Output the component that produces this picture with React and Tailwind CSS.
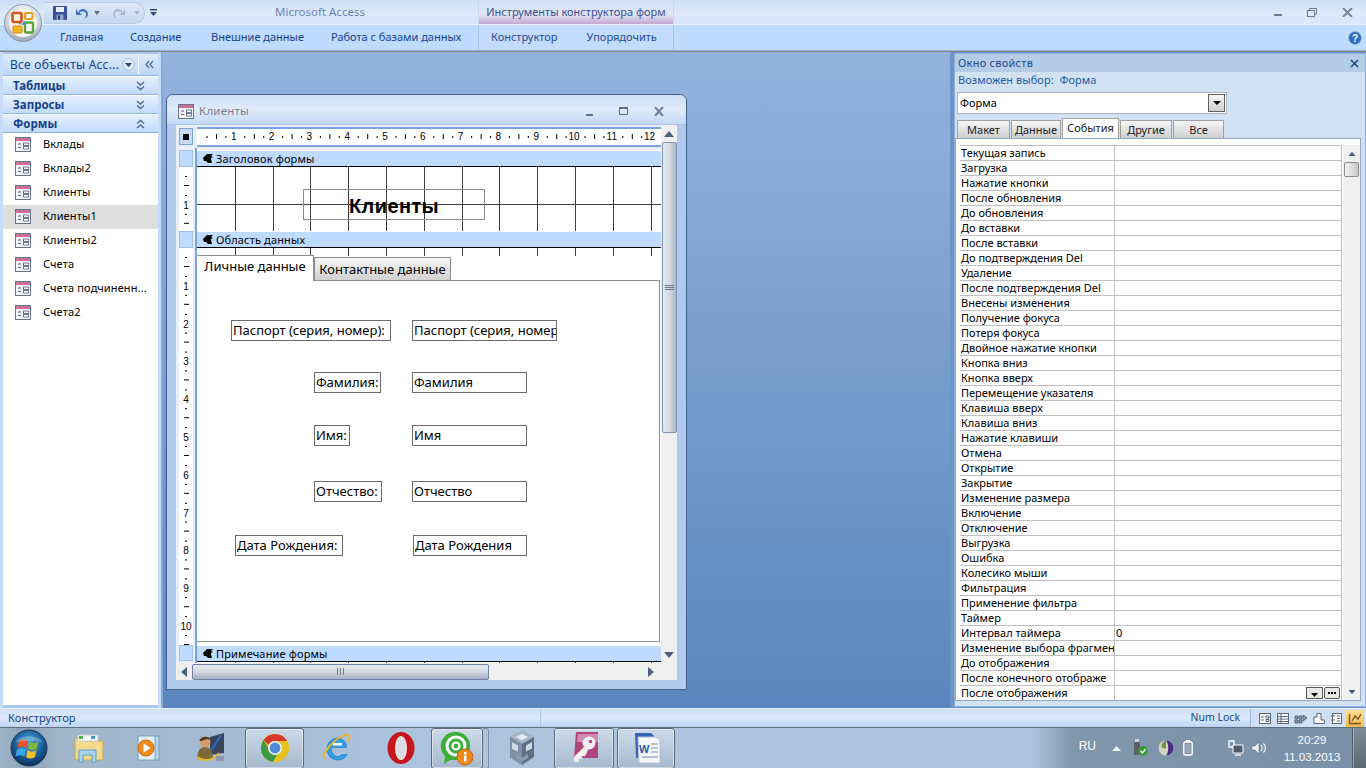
import React from 'react';

const NAV_ITEMS = ['Вклады', 'Вклады2', 'Клиенты', 'Клиенты1', 'Клиенты2', 'Счета', 'Счета подчиненн...', 'Счета2'];

const PROPS = [
  'Текущая запись', 'Загрузка', 'Нажатие кнопки', 'После обновления', 'До обновления', 'До вставки', 'После вставки',
  'До подтверждения Del', 'Удаление', 'После подтверждения Del', 'Внесены изменения', 'Получение фокуса', 'Потеря фокуса',
  'Двойное нажатие кнопки', 'Кнопка вниз', 'Кнопка вверх', 'Перемещение указателя', 'Клавиша вверх', 'Клавиша вниз',
  'Нажатие клавиши', 'Отмена', 'Открытие', 'Закрытие', 'Изменение размера', 'Включение', 'Отключение', 'Выгрузка', 'Ошибка',
  'Колесико мыши', 'Фильтрация', 'Применение фильтра', 'Таймер', 'Интервал таймера', 'Изменение выбора фрагмен',
  'До отображения', 'После конечного отображе', 'После отображения',
];

const PROP_TABS = [
  { name: 'Макет', w: 'w-[53px]' },
  { name: 'Данные', w: 'w-[50px]' },
  { name: 'События', w: 'w-[57px]' },
  { name: 'Другие', w: 'w-[52px]' },
  { name: 'Все', w: 'w-[51px]' },
];

// контролы на поверхности формы: положение - это и есть содержимое макета
const FIELDS = [
  { label: 'Паспорт (серия, номер):', lx: 34, lw: 160, value: 'Паспорт (серия, номер)', vx: 215, vw: 145, y: 72, h: 21 },
  { label: 'Фамилия:', lx: 117, lw: 67, value: 'Фамилия', vx: 215, vw: 115, y: 124, h: 21 },
  { label: 'Имя:', lx: 117, lw: 36, value: 'Имя', vx: 215, vw: 115, y: 177, h: 21 },
  { label: 'Отчество:', lx: 117, lw: 68, value: 'Отчество', vx: 215, vw: 115, y: 233, h: 21 },
  { label: 'Дата Рождения:', lx: 38, lw: 108, value: 'Дата Рождения', vx: 216, vw: 114, y: 287, h: 21 },
];

function FormIcon({ className = '' }) {
  return (
    <svg width="16" height="15" viewBox="0 0 16 15" className={className}>
      <rect x="0.5" y="0.5" width="15" height="14" fill="#f4f6fa" stroke="#66758e" />
      <rect x="1" y="1" width="14" height="3" fill="#cf6f98" />
      <path d="M3 7h3M3 10.5h3" stroke="#4a5a78" />
      <rect x="8.5" y="6" width="5" height="2.5" fill="#fff" stroke="#4a5a78" strokeWidth="0.8" />
      <rect x="8.5" y="9.5" width="5" height="2.5" fill="#fff" stroke="#4a5a78" strokeWidth="0.8" />
    </svg>
  );
}

function DoubleChevron({ up = false }) {
  return (
    <svg width="9" height="10" viewBox="0 0 9 10" className={up ? 'rotate-180' : ''}>
      <path d="M1 1l3.5 3L8 1M1 5.5l3.5 3 3.5-3" fill="none" stroke="#4a6a9a" strokeWidth="1.4" />
    </svg>
  );
}

function OfficeButton() {
  return (
    <svg width="38" height="38" viewBox="0 0 38 38" className="absolute left-[4px] top-[4px] z-10">
      <defs>
        <radialGradient id="orbRing" cx="50%" cy="25%" r="80%">
          <stop offset="0%" stopColor="#f4f5f7" />
          <stop offset="65%" stopColor="#c9d0da" />
          <stop offset="100%" stopColor="#8f9aa8" />
        </radialGradient>
      </defs>
      <circle cx="19" cy="19" r="18.5" fill="url(#orbRing)" stroke="#8b99ac" />
      <circle cx="19" cy="19" r="14" fill="#f6f4ee" />
      <rect x="8.5" y="9" width="9" height="9" rx="1.5" fill="none" stroke="#d8541c" strokeWidth="2.6" />
      <rect x="21" y="9" width="7.500" height="6" rx="1" fill="none" stroke="#e8a21d" strokeWidth="2.2" />
      <rect x="9" y="22" width="9" height="7" rx="1" fill="#f2b81f" stroke="#d6891a" />
      <rect x="21" y="18.500" width="8" height="10" rx="1.500" fill="none" stroke="#5aa53a" strokeWidth="2.4" />
      <path d="M17.500 20h3M20 17v3M15 19.500h1.500" stroke="#3f86c8" strokeWidth="1.500" />
    </svg>
  );
}

function SectionBar({ label }) {
  return (
    <div className="h-[17px] shrink-0 bg-[#bfdbff] border-t border-t-white border-b border-b-black flex items-center pl-[6px] gap-[3px] text-[11px] text-black leading-none">
      <svg width="10" height="9" viewBox="0 0 10 9">
        <path d="M0 4L4 0h6L8 2l2 1-2 1v1l1 4H5L3 7H1z" fill="#000" />
      </svg>
      <span className="tracking-[0.15px]">{label}</span>
    </div>
  );
}

function RulerH() {
  const marks = [];
  for (let i = 0; i <= 12; i++) {
    const x = i * 37.8;
    if (i > 0) {
      marks.push(
        <text key={`n${i}`} x={x - 1} y="11" textAnchor="middle" fontSize="10" fontFamily="Liberation Sans" fill="#000">{i}</text>
      );
    }
    if (i < 12) {
      marks.push(<rect key={`a${i}`} x={x + 9.5} y="7" width="1" height="2" fill="#000" />);
      marks.push(<rect key={`b${i}`} x={x + 19} y="5" width="1" height="5" fill="#000" />);
      marks.push(<rect key={`c${i}`} x={x + 28.4} y="7" width="1" height="2" fill="#000" />);
    }
  }
  return <svg width="464" height="16" className="block bg-white">{marks}</svg>;
}

function RulerV({ height, count }) {
  const marks = [];
  for (let i = 0; i <= count; i++) {
    const y = i * 37.8;
    if (i > 0) {
      marks.push(
        <text key={`n${i}`} x="7" y={y + 4} textAnchor="middle" fontSize="10" fontFamily="Liberation Sans" fill="#000">{i}</text>
      );
    }
    marks.push(<rect key={`a${i}`} x="6" y={y + 9} width="2" height="1" fill="#000" />);
    marks.push(<rect key={`b${i}`} x="5" y={y + 18} width="5" height="1" fill="#000" />);
    marks.push(<rect key={`c${i}`} x="6" y={y + 28} width="2" height="1" fill="#000" />);
  }
  return <svg width="14" height={height} className="block bg-white shrink-0">{marks}</svg>;
}

function GridBox({ height, hLine }) {
  const verts = [];
  for (let i = 1; i <= 12; i++) {
    const x = Math.round(i * 37.8);
    verts.push(<rect key={i} x={x} y="0" width="1" height={height} fill="#3c3c3c" />);
  }
  return (
    <svg width="464" height={height} className="block absolute left-0 top-0">
      {verts}
      {hLine != null && <rect x="0" y={hLine} width="464" height="1" fill="#3c3c3c" />}
    </svg>
  );
}

function Arrow({ dir, className = '' }) {
  const d = {
    up: 'M0 6L5 0l5 6z',
    down: 'M0 0l5 6 5-6z',
    left: 'M6 0v10L0 5z',
    right: 'M0 0v10l6-5z',
  }[dir];
  const small = dir === 'left' || dir === 'right';
  return (
    <svg width={small ? 6 : 10} height={small ? 10 : 6} viewBox={small ? '0 0 6 10' : '0 0 10 6'} className={className}>
      <path d={d} fill="#4d6185" />
    </svg>
  );
}

function FormWindow() {
  return (
    <div className="absolute left-[3px] top-[42px] w-[521px] h-[596px] border border-[#3f5f8c] rounded-t-[7px] bg-[#b0c9ec] flex flex-col overflow-hidden">
      <div className="h-[30px] shrink-0 pt-[3px] bg-gradient-to-b from-[#cfe0f6] via-[#dfeafa] to-[#c4d9f5] border-b border-[#a9c6ea] flex items-center pl-[11px] pr-[22px]">
        <FormIcon />
        <span className="ml-[5px] text-[11.5px] text-[#7b7f8a] tracking-[0.2px]">Клиенты</span>
        <div className="ml-auto flex items-center gap-[26px]">
          <span className="w-[7px] h-[2px] bg-[#5a6f90] mt-[7px]" />
          <span className="w-[9px] h-[8px] border border-[#5a6f90] border-t-2" />
          <svg width="10" height="9" viewBox="0 0 10 9">
            <path d="M1 0l8 9M9 0L1 9" stroke="#6a7c98" strokeWidth="2" />
          </svg>
        </div>
      </div>

      <div className="flex-1 flex flex-col mx-[9px] bg-[#f0f0f0] min-h-0">
        <div className="flex-1 flex min-h-0">
          {/* поверхность конструктора */}
          <div className="w-[485px] bg-[#e9eff8] flex flex-col min-h-0">
            <div className="h-[23px] shrink-0 flex">
              <div className="w-[21px] pl-[3px] pt-[3px]">
                <div className="w-[14px] h-[17px] bg-[#c4daf7] border border-[#7aa2da] flex items-center justify-center">
                  <span className="w-[6px] h-[6px] bg-black" />
                </div>
              </div>
              <div className="w-[464px] mt-[2px] mb-[2px] border-y-2 border-[#78a3dc] h-[20px] overflow-hidden">
                <RulerH />
              </div>
            </div>
            <div className="flex-1 flex min-h-0">
              <div className="w-[21px] shrink-0 pl-[3px] pr-[3px] border-r-2 border-[#78a3dc] flex flex-col overflow-hidden">
                <div className="h-[17px] mt-[2px] shrink-0 w-[14px] bg-[#bfdbff] border border-[#a0c0e8]" />
                <RulerV height={64} count={1} />
                <div className="h-[17px] shrink-0 w-[14px] bg-[#bfdbff] border border-[#a0c0e8]" />
                <RulerV height={397} count={10} />
                <div className="h-[16px] shrink-0 w-[14px] bg-[#bfdbff] border border-[#a0c0e8]" />
              </div>
              <div className="w-[464px] bg-white flex flex-col overflow-hidden">
                <div className="h-[2px] shrink-0 bg-[#e9eff8]" />
                <SectionBar label="Заголовок формы" />
                <div className="relative h-[64px] shrink-0">
                  <GridBox height={64} hLine={37} />
                  <div className="absolute left-[106px] top-[22px] w-[182px] h-[31px] border border-[#8a8a8a]" />
                  <span className="absolute left-[152px] top-[25px] text-[20px] leading-[28px] font-bold tracking-[0.4px] text-black font-['Liberation_Sans',sans-serif]">Клиенты</span>
                </div>
                <SectionBar label="Область данных" />
                <div className="relative flex-1 min-h-0">
                  <GridBox height={8} />
                  {/* вкладки */}
                  <div className="absolute left-0 top-[7px] w-[117px] h-[26px] bg-white border-t border-r border-[#8e8e8e] z-10 flex items-center justify-center pb-[3px] text-[13px] text-black">Личные данные</div>
                  <div className="absolute left-[117px] top-[9px] w-[137px] h-[24px] bg-gradient-to-b from-[#f6f6f6] to-[#cfcfcf] border border-[#8e8e8e] border-b-0 flex items-center justify-center text-[13px] text-black">Контактные данные</div>
                  <div className="absolute left-0 top-[32px] bottom-[3px] w-[463px] border-t border-r border-b border-[#8e8e8e]" />
                  {FIELDS.map(f => (
                    <React.Fragment key={f.label}>
                      <div
                        className="absolute border border-[#6b6b6b] bg-white text-[13px] leading-[19px] pl-[1px] text-black whitespace-nowrap overflow-hidden"
                        style={{ left: f.lx, top: f.y, width: f.lw, height: f.h }}
                      >{f.label}</div>
                      <div
                        className="absolute border border-[#6b6b6b] bg-white text-[13px] leading-[19px] pl-[1px] text-black whitespace-nowrap overflow-hidden"
                        style={{ left: f.vx, top: f.y, width: f.vw, height: f.h }}
                      >{f.value}</div>
                    </React.Fragment>
                  ))}
                </div>
                <SectionBar label="Примечание формы" />
                <div className="relative h-[1px] shrink-0"><GridBox height={1} /></div>
              </div>
            </div>
          </div>
          {/* вертикальная прокрутка */}
          <div className="w-[16px] bg-[#f0f0f0] flex flex-col items-center">
            <div className="h-[17px] flex items-center justify-center"><Arrow dir="up" /></div>
            <div className="w-[15px] h-[291px] border border-[#8094b5] rounded-[2px] bg-gradient-to-r from-[#e8eaee] via-[#d5dae2] to-[#a9b4c6] flex items-center justify-center">
              <div className="w-[9px] h-[5px] border-y border-[#6d7b92] bg-[linear-gradient(#6d7b92,#6d7b92)] bg-[length:100%_1px] bg-center bg-no-repeat" />
            </div>
            <div className="mt-auto h-[17px] flex items-center justify-center"><Arrow dir="down" /></div>
          </div>
        </div>
        {/* горизонтальная прокрутка */}
        <div className="h-[17px] shrink-0 bg-[#f0f0f0] flex items-center">
          <div className="w-[16px] flex justify-center"><Arrow dir="left" /></div>
          <div className="w-[297px] h-[16px] border border-[#6f82a6] rounded-[2px] bg-gradient-to-b from-[#e8eaee] via-[#d3d8e0] to-[#a4afc2] flex items-center justify-center">
            <div className="w-[7px] h-[7px] border-x border-[#6d7b92] bg-[linear-gradient(#6d7b92,#6d7b92)] bg-[length:1px_100%] bg-center bg-no-repeat" />
          </div>
          <div className="ml-[154px] w-[16px] flex justify-center"><Arrow dir="right" /></div>
        </div>
      </div>
      <div className="h-[9px] shrink-0" />
    </div>
  );
}

function NavPane() {
  return (
    <div className="w-[163px] shrink-0 bg-[#a9c8ef] flex">
      <div className="w-[3px] bg-[#c5dcfa]" />
      <div className="w-[155px] flex flex-col">
        <div className="h-[2px] shrink-0 bg-[#a9c8ef]" />
        <div className="h-[22px] shrink-0 flex items-center bg-gradient-to-b from-[#dcebfe] to-[#bcd7fa] border-b border-[#8fb2de] text-[#15428b] text-[12px] tracking-[0.25px]">
          <span className="pl-[7px] w-[119px] whitespace-nowrap overflow-hidden">Все объекты Асс...</span>
          <span className="w-[13px] h-[13px] rounded-full bg-[#dfe8f5] border border-[#a5b9d5] flex items-center justify-center">
            <svg width="7" height="4" viewBox="0 0 7 4"><path d="M0 0h7L3.5 4z" fill="#25406f" /></svg>
          </span>
          <span className="ml-[3px] h-[19px] w-px bg-white" />
          <span className="ml-[6px]">
            <svg width="9" height="9" viewBox="0 0 9 9"><path d="M4 1L1 4.5 4 8M8 1L5 4.5 8 8" fill="none" stroke="#4a6a9a" strokeWidth="1.3" /></svg>
          </span>
        </div>
        {['Таблицы', 'Запросы', 'Формы'].map((g, i) => (
          <div key={g} className="h-[19px] shrink-0 flex items-center justify-between pl-[10px] pr-[13px] bg-gradient-to-b from-[#e6f0fe] to-[#c2dafb] border-b border-[#8fb2de] border-t border-t-white text-[#15428b] font-bold text-[11.5px] leading-none">
            <span>{g}</span>
            <DoubleChevron up={i === 2} />
          </div>
        ))}
        <div className="flex-1 bg-white">
          {NAV_ITEMS.map(item => (
            <div key={item} className={`h-[24px] pb-[2px] flex items-center pl-[12px] text-[11px] text-black tracking-[0.15px] ${item === 'Клиенты1' ? 'bg-[#dedede]' : ''}`}>
              <FormIcon />
              <span className="ml-[12px] whitespace-nowrap">{item}</span>
            </div>
          ))}
        </div>
        <div className="h-[3px] shrink-0 bg-[#a9c8ef]" />
      </div>
      <div className="w-[3px] bg-[#c5dcfa]" />
      <div className="w-[2px] bg-[#86a9d6]" />
    </div>
  );
}

function PropertySheet() {
  return (
    <div className="w-[416px] shrink-0 bg-[#6d94c6] pl-[4px] flex min-h-0">
      <div className="flex-1 mt-[1px] mb-[1px] border border-[#8fb0dc] bg-[#d3e2f3] flex flex-col min-h-0">
        <div className="h-[18px] shrink-0 bg-[#b4cce6] flex items-center justify-between pl-[3px] pr-[6px] text-[11px] text-[#1e4a8f] tracking-[0.25px]">
          <span>Окно свойств</span>
          <svg width="9" height="9" viewBox="0 0 9 9"><path d="M1 1l7 7M8 1L1 8" stroke="#1e4a8f" strokeWidth="1.7" /></svg>
        </div>
        <div className="h-[15px] shrink-0 pl-[3px] text-[11px] leading-[15px] text-[#1e5aa8] tracking-[0.05px] whitespace-pre">Возможен выбор:  Форма</div>
        <div className="mt-[5px] ml-[2px] w-[270px] h-[22px] shrink-0 bg-white border border-[#abb5c3] flex items-center justify-between pl-[2px] pr-[1px] text-[11px] text-black">
          <span>Форма</span>
          <span className="w-[17px] h-[18px] border border-[#606060] bg-gradient-to-b from-[#f7f7f7] to-[#cfcfcf] flex items-center justify-center">
            <svg width="8" height="4" viewBox="0 0 8 4"><path d="M0 0h8L4 4z" fill="#000" /></svg>
          </span>
        </div>
        <div className="mt-[4px] ml-[2px] h-[20px] shrink-0 flex items-end text-[11px] text-[#222] leading-none">
          {PROP_TABS.map(t => (
            t.name === 'События'
              ? <div key={t.name} className={`${t.w} h-[20px] pb-[3px] mr-px bg-white border border-[#a0a0a0] border-b-0 flex items-center justify-center`}>{t.name}</div>
              : <div key={t.name} className={`${t.w} h-[18px] bg-gradient-to-b from-[#f5f5f5] to-[#cfcfcf] border border-[#a0a0a0] border-b-0 flex items-center justify-center mr-px`}>{t.name}</div>
          ))}
        </div>
        <div className="flex-1 min-h-0 mr-[4px] mb-[5px] bg-white border border-[#8ea8c8] pt-[6px] pl-[4px] flex overflow-hidden">
          <div className="w-[382px] border-t border-[#c0c0c0]">
            {PROPS.map((p, i) => (
              <div key={p} className="h-[15px] flex border-b border-[#c0c0c0] last:border-b-0 text-[11px] leading-[14px] text-black">
                <div className="w-[155px] pl-[1px] border-r border-[#c0c0c0] whitespace-nowrap overflow-hidden">{p}</div>
                <div className="flex-1 pl-[1px] border-r border-[#c0c0c0] relative">
                  {p === 'Интервал таймера' && '0'}
                  {i === PROPS.length - 1 && (
                    <div className="absolute right-[1px] top-[1px] flex gap-px">
                      <span className="w-[17px] h-[12px] border border-[#555] bg-[#e8e8e8] flex items-end justify-center pb-[1px]">
                        <svg width="7" height="4" viewBox="0 0 7 4"><path d="M0 0h7L3.5 4z" fill="#000" /></svg>
                      </span>
                      <span className="w-[16px] h-[12px] border border-[#555] rounded-[2px] bg-[#e8e8e8] flex items-center justify-center">
                        <span className="w-[8px] h-[2px] bg-[linear-gradient(90deg,#000_2px,transparent_2px)] bg-[length:3px_2px]" />
                      </span>
                    </div>
                  )}
                </div>
              </div>
            ))}
          </div>
          <div className="w-[17px] ml-px bg-[#f0f0f0] flex flex-col items-center">
            <div className="h-[17px] flex items-center justify-center"><Arrow dir="up" className="scale-75" /></div>
            <div className="w-[15px] h-[15px] border border-[#8d8d8d] rounded-[2px] bg-gradient-to-r from-[#f4f4f4] to-[#c8c8c8]" />
            <div className="mt-auto h-[17px] flex items-center justify-center"><Arrow dir="down" className="scale-75" /></div>
          </div>
        </div>
      </div>
    </div>
  );
}

function ViewIcon({ kind, active }) {
  const stroke = active ? '#7a5a1c' : '#5a6878';
  return (
    <span className={`w-[18px] h-[17px] flex items-center justify-center ${active ? 'bg-gradient-to-b from-[#ffe08f] to-[#f7b84c]' : ''}`}>
      <svg width="14" height="13" viewBox="0 0 14 13" fill="none" stroke={stroke}>
        {kind === 0 && <><rect x="1.5" y="1.5" width="11" height="10" fill="#fff" /><path d="M3 5h3M3 8h3M8 4h3v2H8zM8 7.5h3v2H8z" /></>}
        {kind === 1 && <><rect x="1.5" y="1.5" width="11" height="10" fill="#fff" /><path d="M1.5 4.5h11M1.5 7h11M1.5 9.5h11M5 1.5v10" /></>}
        {kind === 2 && <path d="M1 4h3v3H1zM5 4h3v3H5zM1 8h3v3H1zM5 8h3v3H5zM9 3l4 3-4 3z" fill="#8f98a4" />}
        {kind === 3 && <path d="M2 11.5V5h3V1.5h4V8h3.5v3.5z" fill="#fff" />}
        {kind === 4 && <><rect x="2.5" y="1.5" width="9" height="10" fill="#fff" /><path d="M1 4h4M1 8h4M7 4h3M7 6.5h3M7 9h3" /></>}
        {kind === 5 && <path d="M1.5 2v9.5H13M4 9l3-5 3 3 3-5" strokeWidth="1.4" />}
      </svg>
    </span>
  );
}

function StatusBar() {
  return (
    <div className="h-[19px] shrink-0 bg-gradient-to-b from-[#cfe1f8] via-[#dbe8fa] to-[#bcd5f5] border-t border-[#e9f1fc] flex items-center text-[11px] text-[#15428b]">
      <span className="pl-[8px] w-[540px] tracking-[0.1px]">Конструктор</span>
      <span className="h-full w-px bg-[#b2c8e4]" />
      <span className="ml-auto text-[10.5px]">Num Lock</span>
      <div className="ml-[10px] mr-[1px] h-full w-[115px] pl-[5px] border-l border-[#9db8d8] flex items-center bg-[#cfe0f6]">
        {[0, 1, 2, 3, 4, 5].map(k => <ViewIcon key={k} kind={k} active={k === 5} />)}
      </div>
    </div>
  );
}

function TaskButton({ active, width = 'w-[60px]', children }) {
  return (
    <div className={`${width} h-[41px] shrink-0 flex items-center justify-center ${active ? 'border border-[#5a6a7c] rounded-[3px] bg-gradient-to-b from-[#d5e0eb]/80 to-[#a4b6c8]/80 shadow-[inset_0_0_0_1px_rgba(255,255,255,0.45)]' : ''}`}>
      {children}
    </div>
  );
}

const taskIcons = {
  explorer: (
    <svg width="34" height="34" viewBox="0 0 34 34">
      <path d="M3 7h12l2 3h14v19H3z" fill="#f2d98c" stroke="#c4a65c" />
      <rect x="6" y="4" width="20" height="6" fill="#fff" stroke="#c9c9c9" />
      <rect x="7" y="5" width="4" height="3" fill="#3fb54a" />
      <rect x="19" y="5" width="4" height="3" fill="#3e95d8" />
      <path d="M7 31V19h17v12h-4v-7h-9v7z" fill="#a8d5ee" stroke="#5d9fc8" />
    </svg>
  ),
  wmp: (
    <svg width="30" height="30" viewBox="0 0 30 30">
      <rect x="9" y="3" width="17" height="24" fill="#b9d2e6" stroke="#7ea3c0" />
      <rect x="5" y="3" width="17" height="24" fill="#e3eef6" stroke="#7ea3c0" />
      <circle cx="13" cy="15" r="8" fill="#ef8a1f" stroke="#c96a10" />
      <path d="M10.5 10.5l7 4.5-7 4.5z" fill="#fff" />
    </svg>
  ),
  user: (
    <svg width="34" height="38" viewBox="0 0 34 38">
      <path d="M16 8l14-4v20l-14 2z" fill="#39465a" />
      <path d="M26 6l2 1-13 20-3 1 1-3z" fill="#2c66b8" />
      <circle cx="11" cy="13" r="5.5" fill="#d6a06e" />
      <path d="M5.5 12c0-5 11-6 11-1l-3-1-6 2z" fill="#5a3a1c" />
      <path d="M3 30c0-9 4-12 8-12s8 3 8 12z" fill="#7d6a3a" />
      <path d="M3 28c6 5 16 4 22-4" fill="none" stroke="#e9b52e" strokeWidth="2" />
      <rect x="22" y="27" width="8" height="5" fill="#8d97a4" />
    </svg>
  ),
  chrome: (
    <svg width="30" height="30" viewBox="0 0 30 30">
      <circle cx="15" cy="15" r="14" fill="#e8c21c" />
      <path d="M15 1A14 14 0 0 1 27.1 8H15a7 7 0 0 0-6.4 4L3.6 7A14 14 0 0 1 15 1z" fill="#d8392c" />
      <path d="M3.6 7l5.2 9.6a7 7 0 0 0 8.4 5L13 29A14 14 0 0 1 3.6 7z" fill="#3d9a42" />
      <circle cx="15" cy="15" r="7" fill="#eef3fb" />
      <circle cx="15" cy="15" r="5.4" fill="#4f8ad9" />
    </svg>
  ),
  ie: (
    <svg width="32" height="32" viewBox="0 0 32 32">
      <path d="M10 15.500h15.500C25.500 9 21 6 16.500 6 11 6 6 10.500 6 17s5 11 11 11c4.500 0 7.500-2 9-5.500h-5.500c-1 1.500-2 2-3.500 2-3.500 0-6.500-3-7-9.500z" fill="#2f9fe2" stroke="#1a79bd" strokeWidth="0.6" />
      <rect x="12" y="11" width="9" height="2.500" fill="#fff" />
      <path d="M3 27C1 22 12 7 24 3c5-1.500 6 2 3 6" fill="none" stroke="#f0b31c" strokeWidth="1.800" />
    </svg>
  ),
  opera: (
    <svg width="30" height="34" viewBox="0 0 30 34">
      <ellipse cx="15" cy="17" rx="13.500" ry="16" fill="#c4161c" />
      <ellipse cx="15" cy="17" rx="6" ry="12" fill="#f7e9e2" />
      <ellipse cx="15" cy="17" rx="4.500" ry="11" fill="#d9dde2" />
    </svg>
  ),
  qip: (
    <svg width="34" height="36" viewBox="0 0 34 36">
      <path d="M16 2a14 14 0 0 1 14 14c0 8-6 14-14 14h-6l-6 4 1-8A14 14 0 0 1 16 2z" fill="#3dae3a" />
      <circle cx="16" cy="16" r="9" fill="none" stroke="#fff" strokeWidth="3" />
      <circle cx="16" cy="16" r="3.500" fill="none" stroke="#fff" strokeWidth="2.200" />
      <circle cx="25" cy="27" r="8" fill="#ef8a1f" stroke="#c65f0b" />
      <rect x="24" y="25.500" width="2.400" height="6" fill="#fff" />
      <rect x="24" y="22" width="2.400" height="2.400" fill="#fff" />
    </svg>
  ),
  vbox: (
    <svg width="30" height="38" viewBox="0 0 30 38">
      <path d="M15 2l12 6v20l-12 8L3 28V8z" fill="#5f6f86" />
      <path d="M15 2l12 6-12 7L3 8z" fill="#a7b6c8" />
      <path d="M3 8l12 7v21L3 28z" fill="#7e90a6" />
      <path d="M15 5l6 3-6 3.500L9 8z" fill="#e4ebf2" />
      <path d="M5 13l6 3.500v6L5 20zM25 13l-6 3.500v6l6-3z" fill="#cfd9e4" />
      <path d="M9 25l6 3.500 6-3.500v4l-6 3.500L9 29z" fill="#8899ad" />
    </svg>
  ),
  access: (
    <svg width="32" height="34" viewBox="0 0 32 34">
      <path d="M8 1h22v26H6z" fill="#b0457e" />
      <path d="M10 3h20v8H9z" fill="#d48ab0" />
      <circle cx="21" cy="12" r="6.500" fill="#f1f1f1" />
      <path d="M17 15L6 26v5h5v-3h3v-3h3l3-6z" fill="#f1f1f1" stroke="#ccc" strokeWidth="0.5" />
      <circle cx="22.500" cy="10.500" r="1.800" fill="#b0457e" />
    </svg>
  ),
  word: (
    <svg width="32" height="34" viewBox="0 0 32 34">
      <path d="M5 2h16l3 3v18L6 27z" fill="#3565b4" />
      <path d="M8 6h18l4 3v23H9z" fill="#f6f8fb" stroke="#b9c2cf" />
      <path d="M21 13h7M21 17h7M21 21h7M12 26h16" stroke="#7b8da6" />
      <text x="9" y="22" fontSize="11" fontWeight="bold" fontFamily="Liberation Sans" fill="#2a5aaa">W</text>
    </svg>
  ),
};

function Taskbar() {
  return (
    <div className="h-[41px] shrink-0 bg-[linear-gradient(90deg,#9db3c9_0%,#abc3dd_30%,#adc5df_75.5%,#7f96ad_78.5%,#7a90a8_100%)] border-t border-[#5f6d7c] flex items-stretch">
      <div className="w-[58px] shrink-0 flex items-center justify-center bg-gradient-to-r from-transparent via-[#7f94a9]/60 to-transparent">
        <svg width="38" height="38" viewBox="0 0 38 38">
          <defs>
            <radialGradient id="startOrb" cx="50%" cy="35%" r="65%">
              <stop offset="0%" stopColor="#4fa6dc" />
              <stop offset="60%" stopColor="#1a5f9b" />
              <stop offset="100%" stopColor="#0b3058" />
            </radialGradient>
          </defs>
          <circle cx="19" cy="19" r="18" fill="url(#startOrb)" stroke="#23394f" />
          <path d="M9 12c3-2 6-2 9 0l-1.500 7c-3-2-6-2-9 0z" fill="#e8532a" />
          <path d="M19.500 12.500c3 2 6 2 9 0L27 19.500c-3 2-6 2-9 0z" fill="#7dba3c" />
          <path d="M7 20.500c3-2 6-2 9 0L14.500 27.500c-3-2-6-2-9 0z" fill="#3ea5e6" />
          <path d="M17.500 21c3 2 6 2 9 0L25 28c-3 2-6 2-9 0z" fill="#f1c12a" />
          <path d="M5 14C8 5 30 5 33 14c-5-3-23-3-28 0z" fill="#fff" opacity="0.25" />
        </svg>
      </div>
      <div className="flex items-center">
        <TaskButton width="w-[62px]">{taskIcons.explorer}</TaskButton>
        <TaskButton width="w-[56px]">{taskIcons.wmp}</TaskButton>
        <TaskButton width="w-[69px]">{taskIcons.user}</TaskButton>
        <TaskButton active width="w-[59px]">{taskIcons.chrome}</TaskButton>
        <TaskButton width="w-[66px]">{taskIcons.ie}</TaskButton>
        <TaskButton width="w-[61px]">{taskIcons.opera}</TaskButton>
        <TaskButton active width="w-[52px]">{taskIcons.qip}</TaskButton>
        <div className="w-[6px] h-[41px] shrink-0 border border-[#7d8fa2] border-l-0 rounded-r-[3px]" />
        <TaskButton width="w-[65px]">{taskIcons.vbox}</TaskButton>
        <TaskButton active width="w-[60px]">{taskIcons.access}</TaskButton>
        <div className="w-[3px]" />
        <TaskButton active width="w-[58px]">{taskIcons.word}</TaskButton>
      </div>

      <div className="ml-auto flex items-center text-white">
        <span className="text-[12px] mr-[16px] mb-[4px] font-['Liberation_Sans',sans-serif]">RU</span>
        <svg width="9" height="5" viewBox="0 0 9 5" className="mr-[11px]"><path d="M0 5l4.500-5L9 5z" fill="#eef3f8" /></svg>
        <svg width="16" height="18" viewBox="0 0 16 18" className="mr-[10px]">
          <rect x="2" y="3" width="6" height="13" rx="1" fill="#5a5f66" />
          <path d="M3 0h4v3H3z" fill="#c8ccd2" />
          <circle cx="11" cy="12" r="5" fill="#3d9a3a" />
          <path d="M8.500 12l2 2 3-4" fill="none" stroke="#fff" strokeWidth="1.300" />
        </svg>
        <svg width="16" height="16" viewBox="0 0 16 16" className="mr-[9px]">
          <circle cx="8" cy="8" r="7.500" fill="#cfd6c6" />
          <path d="M8 .5a7.500 7.500 0 0 1 0 15c3-3 3-12 0-15z" fill="#4b2a7f" />
          <path d="M8 .5C4 2 3 5 4 8l4 .5z" fill="#6f9a3a" />
        </svg>
        <svg width="10" height="16" viewBox="0 0 10 16" className="mr-[35px]">
          <rect x="0.800" y="2" width="8.400" height="13" rx="1.500" fill="none" stroke="#fff" strokeWidth="1.400" />
          <rect x="3" y="0" width="4" height="2" fill="#fff" />
          <rect x="2.500" y="4" width="5" height="9" fill="#9aa9b8" />
        </svg>
        <svg width="16" height="16" viewBox="0 0 16 16" className="mr-[8px]">
          <path d="M1 1h5v6H1z" fill="none" stroke="#fff" strokeWidth="1.300" />
          <path d="M5 5h10v8H5z" fill="#4c5c6c" stroke="#fff" />
          <path d="M7 15h6" stroke="#fff" strokeWidth="1.300" />
        </svg>
        <svg width="16" height="14" viewBox="0 0 16 14" className="mr-[7px]">
          <path d="M0 5h3l4-4v12l-4-4H0z" fill="#e9eef3" stroke="#51606f" strokeWidth="0.500" />
          <path d="M9 4c1.500 1.500 1.500 4.500 0 6M11.500 2.500c2.500 2.500 2.500 6.500 0 9" fill="none" stroke="#eef3f8" strokeWidth="1.200" />
        </svg>
        <div className="w-[74px] mt-[2px] text-center text-[11.5px] leading-[17px] font-['Liberation_Sans',sans-serif]">
          <div>20:29</div>
          <div>11.03.2013</div>
        </div>
        <div className="ml-[3px] w-[14px] h-[41px] border-l border-[#4f5d6b] bg-gradient-to-b from-[#7f8c99] to-[#5b6773] shadow-[inset_1px_0_0_rgba(255,255,255,0.35)]" />
      </div>
    </div>
  );
}

export default function App() {
  return (
    <div className="w-[1366px] h-[768px] overflow-hidden flex flex-col font-['Noto_Sans',sans-serif] bg-[#6d94c6] relative">
      <OfficeButton />
      {/* заголовок окна */}
      <div className="h-[25px] shrink-0 relative bg-gradient-to-b from-[#cbdcf5] via-[#dde8f9] to-[#dbe8fa] border-b border-[#eaf2fd] flex">
        <div className="w-[153px] shrink-0" />
        <div className="w-[325px] shrink-0 pl-[9px] flex items-center justify-center text-[11.5px] text-[#6a83b5]">Microsoft Access</div>
        <div className="w-[196px] shrink-0 bg-[linear-gradient(#d3e1f5_0%,#dfe6f6_60%,#c4a6cf_100%)] border-x border-[#c7d6eb] flex items-center justify-center text-[11px] text-[#3b4f94]">Инструменты конструктора форм</div>
        <div className="ml-auto mr-[13px] flex items-center gap-[25px]">
          <span className="w-[8px] h-[2px] bg-[#6d7b8f] mt-[6px]" />
          <svg width="10" height="9" viewBox="0 0 10 9" fill="none" stroke="#6d7b8f"><rect x="0.500" y="2.500" width="7" height="6" /><path d="M2.500 2.500V.500h7v5.500h-2" /></svg>
          <svg width="11" height="9" viewBox="0 0 11 9"><path d="M1 0l9 9M10 0L1 9" stroke="#7a8698" strokeWidth="2" /></svg>
        </div>
        {/* панель быстрого доступа */}
        <div className="absolute left-[44px] top-[2px] w-[101px] h-[22px] rounded-r-full border border-[#b8cbe6] border-l-0 bg-gradient-to-b from-[#dfe9f8] to-[#c5d8f2] flex items-center pl-[9px] gap-[5px]">
          <svg width="14" height="14" viewBox="0 0 14 14">
            <rect width="14" height="14" rx="1" fill="#3b4f9c" />
            <rect x="3" y="1" width="8" height="5" fill="#e9eef7" />
            <rect x="3.500" y="8.500" width="7" height="5.500" fill="#8ea0c8" />
            <rect x="5" y="9.500" width="2" height="4" fill="#2a3a7c" />
          </svg>
          <svg width="14" height="14" viewBox="0 0 14 14" className="ml-[3px]"><path d="M4 7l-3-4v6h6L4.500 6.500C7 4.500 10 5 11 7.500c.5 1.500 0 3-1.500 5 3-1 4-4 3-6.500C11 2.500 7 2 4 4.500" fill="#3f6fb8" /></svg>
          <svg width="6" height="4" viewBox="0 0 6 4"><path d="M0 0h6L3 4z" fill="#60708c" /></svg>
          <svg width="14" height="14" viewBox="0 0 14 14" className="ml-[7px]"><path d="M10 7l3-4v6H7l2.500-2.500C7 4.500 4 5 3 7.500c-.5 1.500 0 3 1.500 5-3-1-4-4-3-6.500C3 2.500 7 2 10 4.500" fill="#a9b8cf" /></svg>
          <svg width="6" height="4" viewBox="0 0 6 4" className="ml-[3px]"><path d="M0 0h6L3 4z" fill="#a9b8cf" /></svg>
        </div>
        <svg width="7" height="8" viewBox="0 0 7 8" className="absolute left-[150px] top-[9px]"><path d="M0 0h7v1.500H0zM0 3h7L3.500 7z" fill="#304a78" /></svg>
      </div>

      {/* вкладки ленты */}
      <div className="h-[26px] shrink-0 relative bg-[#bfdbff] border-b border-[#8fb0dc] flex items-center text-[11px] text-[#15428b]">
        <span className="ml-[60px] w-[43px]">Главная</span>
        <span className="ml-[27px] w-[52px] whitespace-nowrap">Создание</span>
        <span className="ml-[29px] w-[93px] whitespace-nowrap">Внешние данные</span>
        <span className="ml-[27px] w-[131px] whitespace-nowrap">Работа с базами данных</span>
        <div className="ml-[16px] h-full w-[196px] bg-[#c3dcfe] border-x border-[#a9c4e8] flex items-center text-[#2a4a94]">
          <span className="ml-[12px]">Конструктор</span>
          <span className="ml-[29px]">Упорядочить</span>
        </div>
        <svg width="14" height="14" viewBox="0 0 14 14" className="ml-auto mr-[4px]">
          <circle cx="7" cy="7" r="6.500" fill="#2f6cc0" stroke="#9cb8df" />
          <text x="7" y="10.500" textAnchor="middle" fontSize="10" fontWeight="bold" fontFamily="Liberation Sans" fill="#fff">?</text>
        </svg>
      </div>
      <div className="h-[1px] shrink-0 bg-[#8a8578]" />

      {/* рабочая область */}
      <div className="flex-1 flex min-h-0">
        <NavPane />
        <div className="flex-1 relative bg-gradient-to-b from-[#93b3dd] to-[#5a86bd]">
          <FormWindow />
        </div>
        <PropertySheet />
      </div>

      <StatusBar />
      <Taskbar />
    </div>
  );
}
